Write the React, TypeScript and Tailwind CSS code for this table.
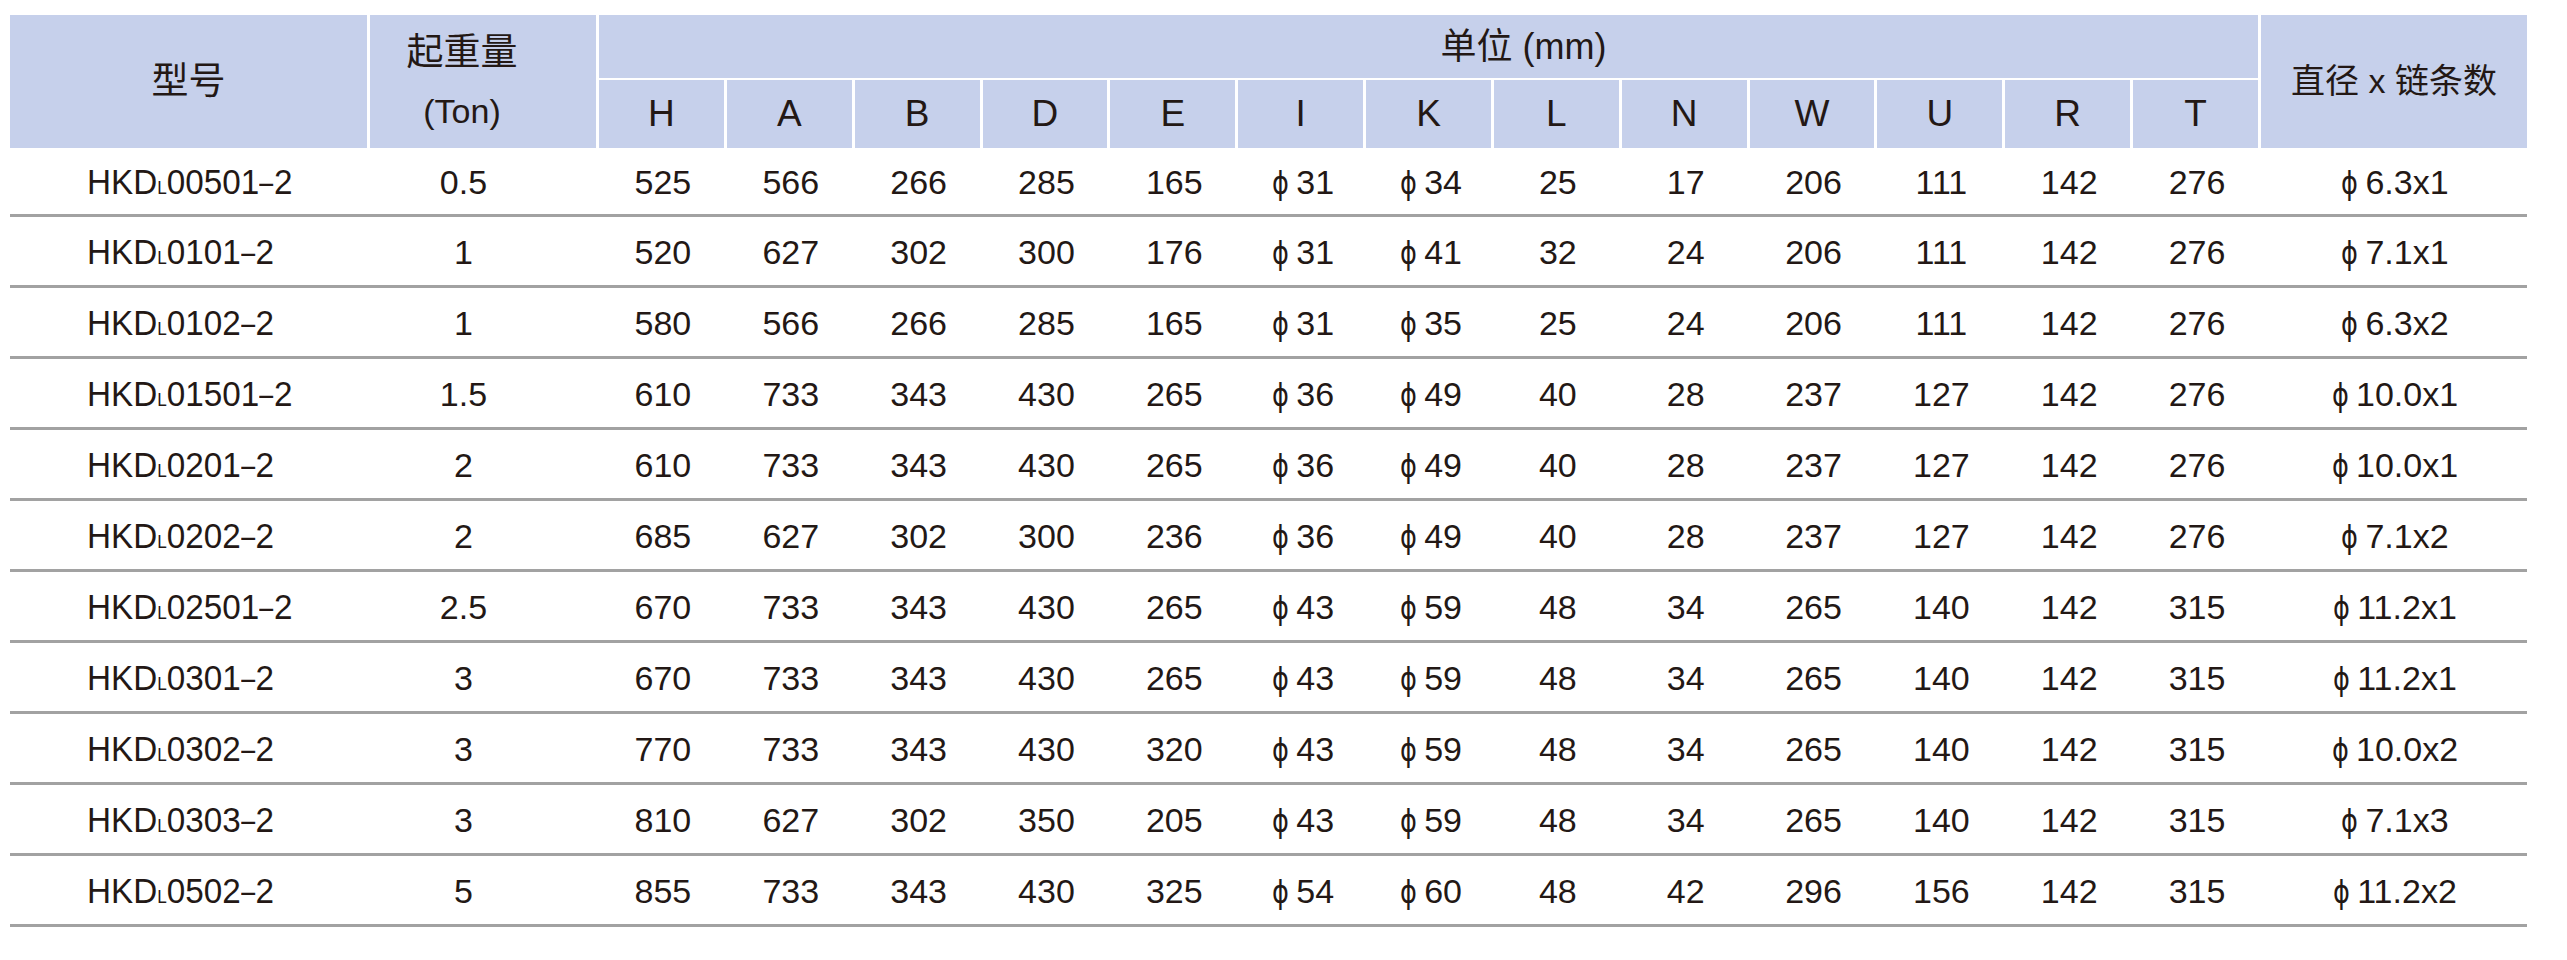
import React from "react";

const cols = "grid-cols-[360px_229px_repeat(13,127.85px)_266px]";

const subHeads = ["H", "A", "B", "D", "E", "I", "K", "L", "N", "W", "U", "R", "T"];

const rows: string[][] = [
  ["00501", "0.5", "525", "566", "266", "285", "165", "ϕ31", "ϕ34", "25", "17", "206", "111", "142", "276", "ϕ6.3x1"],
  ["0101", "1", "520", "627", "302", "300", "176", "ϕ31", "ϕ41", "32", "24", "206", "111", "142", "276", "ϕ7.1x1"],
  ["0102", "1", "580", "566", "266", "285", "165", "ϕ31", "ϕ35", "25", "24", "206", "111", "142", "276", "ϕ6.3x2"],
  ["01501", "1.5", "610", "733", "343", "430", "265", "ϕ36", "ϕ49", "40", "28", "237", "127", "142", "276", "ϕ10.0x1"],
  ["0201", "2", "610", "733", "343", "430", "265", "ϕ36", "ϕ49", "40", "28", "237", "127", "142", "276", "ϕ10.0x1"],
  ["0202", "2", "685", "627", "302", "300", "236", "ϕ36", "ϕ49", "40", "28", "237", "127", "142", "276", "ϕ7.1x2"],
  ["02501", "2.5", "670", "733", "343", "430", "265", "ϕ43", "ϕ59", "48", "34", "265", "140", "142", "315", "ϕ11.2x1"],
  ["0301", "3", "670", "733", "343", "430", "265", "ϕ43", "ϕ59", "48", "34", "265", "140", "142", "315", "ϕ11.2x1"],
  ["0302", "3", "770", "733", "343", "430", "320", "ϕ43", "ϕ59", "48", "34", "265", "140", "142", "315", "ϕ10.0x2"],
  ["0303", "3", "810", "627", "302", "350", "205", "ϕ43", "ϕ59", "48", "34", "265", "140", "142", "315", "ϕ7.1x3"],
  ["0502", "5", "855", "733", "343", "430", "325", "ϕ54", "ϕ60", "48", "42", "296", "156", "142", "315", "ϕ11.2x2"],
];

function Val({ v }: { v: string }) {
  if (v.startsWith("ϕ")) {
    return (
      <span className="inline-flex items-baseline">
        <span className="mr-[5px] inline-block scale-x-[0.8] text-[32px] font-['DejaVu_Sans',sans-serif]">ϕ</span>
        <span>{v.slice(1)}</span>
      </span>
    );
  }
  return <span>{v}</span>;
}

export default function App() {
  return (
    <div
      className="w-[2567px] h-[960px] bg-white text-[#231815] pt-[15px] pl-[10px]"
      style={{ fontFamily: '"Liberation Sans", Arial, "Noto Sans CJK SC", sans-serif' }}
    >
      <div className="w-[2517px]">
        {/* header */}
        <div className={`grid ${cols} grid-rows-[65px_68px]`}>
          <div className="row-span-2 bg-[#c6d0eb] border-r-[3px] border-white flex items-center justify-center text-[37px]">
            型号
          </div>
          <div className="row-span-2 bg-[#c6d0eb] border-r-[3px] border-white flex flex-col items-center justify-center pr-[42px] leading-[59px]">
            <span className="text-[37px]">起重量</span>
            <span className="text-[34px]">(Ton)</span>
          </div>
          <div className="col-span-13 bg-[#c6d0eb] border-r-[3px] border-b-[2px] border-white flex items-center justify-center pl-[190px] text-[36px]">
            单位 (mm)
          </div>
          <div className="row-span-2 bg-[#c6d0eb] flex items-center justify-center text-[34px]">
            直径 x 链条数
          </div>
          {subHeads.map((h) => (
            <div
              key={h}
              className="bg-[#c6d0eb] border-r-[3px] border-white flex items-center justify-center text-[37px]"
            >
              {h}
            </div>
          ))}
        </div>
        {/* body */}
        {rows.map((r, i) => (
          <div
            key={i}
            className={`grid ${cols} ${i === 0 ? "h-[69px]" : "h-[71px]"} border-b-[3px] border-[#a2a2a2] items-center text-[34px] pt-[3px]`}
          >
            <div className="pl-[77px]">
              <div className="text-[35px] flex items-baseline origin-left scale-x-[0.95]">
                <span>HKD</span>
                <span className="text-[18px]">L</span>
                <span>{r[0]}</span>
                <span className="inline-block scale-x-[0.75] mx-[-2px]">–</span>
                <span>2</span>
              </div>
            </div>
            <div className="flex justify-center pr-[42px]">{r[1]}</div>
            {r.slice(2, 15).map((v, j) => (
              <div key={j} className="flex justify-center">
                <Val v={v} />
              </div>
            ))}
            <div className="flex justify-center">
              <Val v={r[15]} />
            </div>
          </div>
        ))}
      </div>
    </div>
  );
}
